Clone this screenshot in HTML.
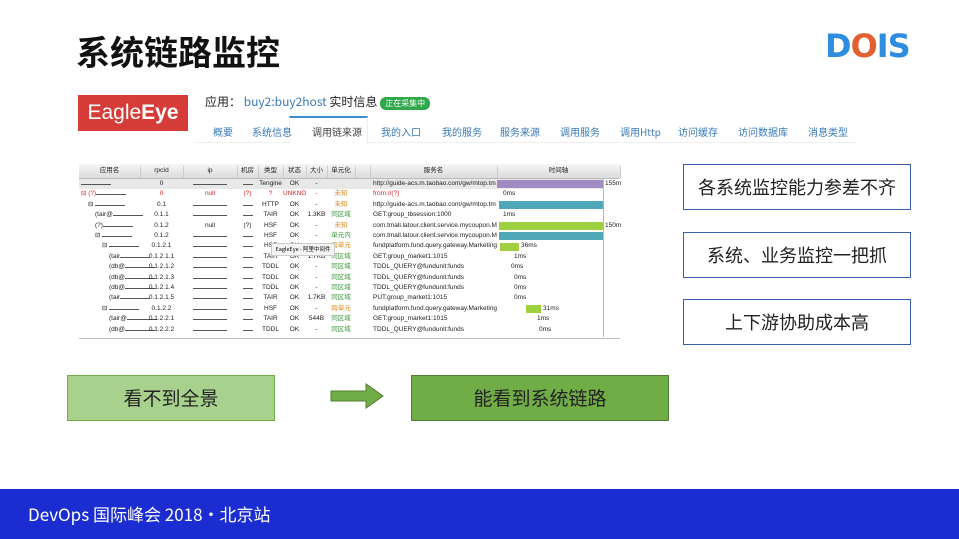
<html><head><style>
body{margin:0;width:959px;height:539px;background:#fff;position:relative;overflow:hidden;font-family:"Liberation Sans","Noto Sans CJK SC",sans-serif}
.a{position:absolute}
.t{font-size:6.5px;color:#222;white-space:nowrap;overflow:hidden;line-height:10px;height:10px}
.box{position:absolute;border:1.5px solid #3a5fa8;background:#fff;color:#222;font-size:18px;text-align:center;font-family:"Noto Sans CJK SC",sans-serif}
</style></head><body>
<div class="a" style="left:76px;top:26px;font-size:34px;font-weight:bold;font-family:'Noto Sans CJK SC',sans-serif;color:#111;line-height:50px">系统链路监控</div>
<div class="a" style="left:825px;top:26px;font-size:32px;font-weight:900;font-family:'DejaVu Sans',sans-serif;letter-spacing:-1px;line-height:40px"><span style="color:#2f8de0">D</span><span style="color:#e06030">O</span><span style="color:#2f8de0">IS</span></div>

<div class="a" style="left:78px;top:95px;width:110px;height:36px;background:#d63c38;color:#fff;font-size:21px;line-height:36px;text-align:center">Eagle<b>Eye</b></div>
<div class="a" style="left:205px;top:93px;font-size:12px;color:#222;font-family:'Noto Sans CJK SC',sans-serif">应用： <span style="color:#3a7ab8">buy2:buy2host</span> 实时信息 <span style="background:#2ea84a;color:#fff;font-size:8px;padding:1px 5px;border-radius:6px">正在采集中</span></div>
<div class="a" style="left:196px;top:117px;width:660px;height:25px;border-bottom:1px solid #eee"></div>
<div class="a" style="left:289px;top:116px;width:77px;height:27px;border-top:2px solid #3a8fd0;border-left:1px solid #eee;border-right:1px solid #eee;background:#fff"></div>
<div class="a" style="left:213px;top:124px;font-size:10px;color:#3a7ab8;font-family:'Noto Sans CJK SC',sans-serif;white-space:nowrap">
<span style="position:absolute;left:0">概要</span><span style="position:absolute;left:39px">系统信息</span><span style="position:absolute;left:99px;color:#444">调用链来源</span><span style="position:absolute;left:168px">我的入口</span><span style="position:absolute;left:229px">我的服务</span><span style="position:absolute;left:287px">服务来源</span><span style="position:absolute;left:347px">调用服务</span><span style="position:absolute;left:407px">调用Http</span><span style="position:absolute;left:465px">访问缓存</span><span style="position:absolute;left:525px">访问数据库</span><span style="position:absolute;left:595px">消息类型</span></div>

<div class="a" style="left:79px;top:164px;width:541px;height:174px;border-bottom:1px solid #bbb"></div>
<div class="a" style="left:79px;top:164px;width:541px;height:14px;background:linear-gradient(#f6f6f6,#dcdcdc);border-bottom:1px solid #bbb"></div>
<div class="a" style="left:79px;top:179px;width:525px;height:10px;background:#e8e8e8"></div>
<div class="a" style="left:603px;top:179px;width:1px;height:158px;background:#f0a0a0"></div>
<div id="tbl"></div>
<div class="a" style="left:497px;top:180px;width:106px;height:8px;background:#a08cc0"></div>
<div class="a" style="left:499px;top:201px;width:104px;height:8px;background:#4fa8b8"></div>
<div class="a" style="left:499px;top:222px;width:104px;height:8px;background:#9ed040"></div>
<div class="a" style="left:499px;top:232px;width:104px;height:8px;background:#4fa8b8"></div>
<div class="a" style="left:500px;top:243px;width:19px;height:8px;background:#9ed040"></div>
<div class="a" style="left:526px;top:305px;width:15px;height:8px;background:#9ed040"></div>
<div class="a" style="left:271px;top:243px;width:62px;height:11px;background:#f4f4f4;border:1px solid #ccc;font-size:5.5px;line-height:11px;text-align:center;font-family:'Noto Sans CJK SC',sans-serif">EagleEye - 阿里中间件</div>

<div class="box" style="left:683px;top:164px;width:226px;height:44px;line-height:44px">各系统监控能力参差不齐</div>
<div class="box" style="left:683px;top:232px;width:226px;height:44px;line-height:44px">系统、业务监控一把抓</div>
<div class="box" style="left:683px;top:299px;width:226px;height:44px;line-height:44px">上下游协助成本高</div>

<div class="a" style="left:67px;top:375px;width:206px;height:44px;background:#a9d18e;border:1px solid #70ad47;font-size:19px;line-height:44px;text-align:center;color:#222;font-family:'Noto Sans CJK SC',sans-serif">看不到全景</div>
<svg class="a" style="left:330px;top:383px" width="54" height="26"><polygon points="1,8 36,8 36,1 53,13 36,25 36,18 1,18" fill="#70ad47" stroke="#507e32" stroke-width="1"/></svg>
<div class="a" style="left:411px;top:375px;width:256px;height:44px;background:#70ad47;border:1px solid #507e32;font-size:19px;line-height:44px;text-align:center;color:#222;font-family:'Noto Sans CJK SC',sans-serif">能看到系统链路</div>

<div class="a" style="left:0;top:489px;width:959px;height:50px;background:#1b2dd0;color:#fff;font-size:17px;line-height:50px;font-family:'Noto Sans CJK SC',sans-serif"><span style="padding-left:28px">DevOps 国际峰会 2018·北京站</span></div>

<script>
var cols=[[79,61],[140,43],[183,54],[237,21],[258,25],[283,23],[306,21],[327,28],[355,15],[370,127],[497,123]];
var hd=['应用名','rpcId','ip','机房','类型','状态','大小','单元化','','服务名','时间轴'];
var o='';
for(var i=0;i<11;i++)o+='<div class="a t" style="left:'+cols[i][0]+'px;top:166px;width:'+cols[i][1]+'px;text-align:center;border-right:1px solid #ccc;height:12px;line-height:10px">'+hd[i]+'</div>';
var R=[
['','0','','','Tengine','OK','-','','http://guide-acs.m.taobao.com/gw/mtop.tm','155m',0],
['⊟ (?)','0','null','(?)','?','UNKNOV','-','未知','from://(?)','0ms',0],
['⊟ ','0.1','','','HTTP','OK','-','未知','http://guide-acs.m.taobao.com/gw/mtop.tm','',1],
['(tair@','0.1.1','','','TAIR','OK','1.3KB','同区域','GET:group_tbsession:1000','1ms',2],
['(?)','0.1.2','null','(?)','HSF','OK','-','未知','com.tmall.latour.client.service.mycoupon.MyC','150m',2],
['⊟ ','0.1.2','','','HSF','OK','-','单元内','com.tmall.latour.client.service.mycoupon.MyC','',2],
['⊟ ','0.1.2.1','','','HSF','OK','-','跨单元','fundplatform.fund.query.gateway.MarketingC','36ms',3],
['(tair','0.1.2.1.1','','','TAIR','OK','1.7KB','同区域','GET:group_market1:1015','1ms',4],
['(db@','0.1.2.1.2','','','TDDL','OK','-','同区域','TDDL_QUERY@fundunit:funds','0ms',4],
['(db@','0.1.2.1.3','','','TDDL','OK','-','同区域','TDDL_QUERY@fundunit:funds','0ms',4],
['(db@','0.1.2.1.4','','','TDDL','OK','-','同区域','TDDL_QUERY@fundunit:funds','0ms',4],
['(tair','0.1.2.1.5','','','TAIR','OK','1.7KB','同区域','PUT:group_market1:1015','0ms',4],
['⊟ ','0.1.2.2','','','HSF','OK','-','跨单元','fundplatform.fund.query.gateway.MarketingC','31ms',3],
['(tair@','0.1.2.2.1','','','TAIR','OK','544B','同区域','GET:group_market1:1015','1ms',4],
['(db@','0.1.2.2.2','','','TDDL','OK','-','同区域','TDDL_QUERY@fundunit:funds','0ms',4]];
var tx=[0,0,0,505,0,0,502,514,511,514,514,514,0,537,539];
var bx=[605,503,0,503,605,0,521,0,0,0,0,0,543,0,0];
for(var r=0;r<R.length;r++){var y=179+r*10.4,d=R[r];
 var red=r==1?'color:#d22;':'';
 o+='<div class="a t" style="left:'+(81+d[10]*7)+'px;top:'+y+'px;'+red+'">'+d[0]+'<span style="border-bottom:1px solid #555;display:inline-block;width:30px;height:5px"></span></div>';
 for(var c=1;c<8;c++){var st=red;if(c==7)st='color:'+(d[7]=='未知'||d[7]=='跨单元'?'#e08a20':'#3a9a3a')+';';
  var txt=d[c];if(c==2&&txt=='')txt='<span style="border-bottom:1px solid #555;display:inline-block;width:34px;height:5px"></span>';
  if(c==3&&txt=='')txt='<span style="border-bottom:1px solid #555;display:inline-block;width:10px;height:5px"></span>';
  o+='<div class="a t" style="left:'+cols[c][0]+'px;width:'+cols[c][1]+'px;text-align:center;top:'+y+'px;'+st+'">'+txt+'</div>';}
 o+='<div class="a t" style="left:373px;width:124px;top:'+y+'px;'+red+'">'+d[8]+'</div>';
 if(d[9]){var xx=bx[r]||tx[r]||503;o+='<div class="a t" style="left:'+xx+'px;top:'+y+'px">'+d[9]+'</div>';}
}
document.getElementById('tbl').innerHTML=o;
</script>
</body></html>
